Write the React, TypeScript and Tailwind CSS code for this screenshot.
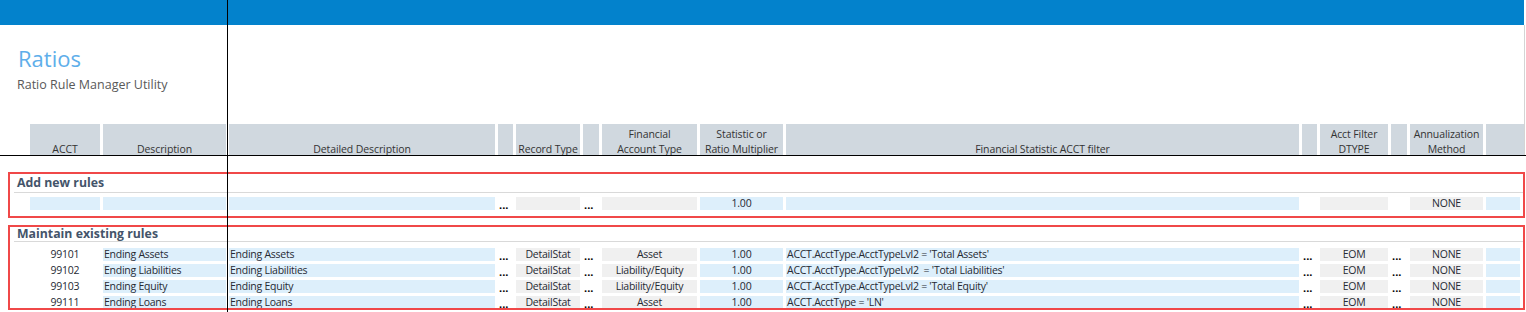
const font = { fontFamily: '"Open Sans", "Noto Sans", sans-serif' };

type Cell = { text: string; kind: "blue" | "gray" | "none" | "dots"; align?: "left" | "center" };

const headers: { lines: string[] }[] = [
  { lines: ["ACCT"] },
  { lines: ["Description"] },
  { lines: ["Detailed Description"] },
  { lines: [] },
  { lines: ["Record Type"] },
  { lines: [] },
  { lines: ["Financial", "Account Type"] },
  { lines: ["Statistic or", "Ratio Multiplier"] },
  { lines: ["Financial Statistic ACCT filter"] },
  { lines: [] },
  { lines: ["Acct Filter", "DTYPE"] },
  { lines: [] },
  { lines: ["Annualization", "Method"] },
  { lines: [] },
];

const newRow: Cell[] = [
  { text: "", kind: "blue" },
  { text: "", kind: "blue" },
  { text: "", kind: "blue" },
  { text: "...", kind: "dots" },
  { text: "", kind: "gray" },
  { text: "...", kind: "dots" },
  { text: "", kind: "gray" },
  { text: "1.00", kind: "blue", align: "center" },
  { text: "", kind: "blue" },
  { text: "", kind: "none" },
  { text: "", kind: "gray" },
  { text: "", kind: "none" },
  { text: "NONE", kind: "gray", align: "center" },
  { text: "", kind: "blue" },
];

const rules = [
  { acct: "99101", desc: "Ending Assets", type: "Asset", filter: "ACCT.AcctType.AcctTypeLvl2 = 'Total Assets'" },
  { acct: "99102", desc: "Ending Liabilities", type: "Liability/Equity", filter: "ACCT.AcctType.AcctTypeLvl2  = 'Total Liabilities'" },
  { acct: "99103", desc: "Ending Equity", type: "Liability/Equity", filter: "ACCT.AcctType.AcctTypeLvl2 = 'Total Equity'" },
  { acct: "99111", desc: "Ending Loans", type: "Asset", filter: "ACCT.AcctType = 'LN'" },
];

const ruleCells = (r: (typeof rules)[number]): Cell[] => [
  { text: r.acct, kind: "none", align: "center" },
  { text: r.desc, kind: "blue" },
  { text: r.desc, kind: "blue" },
  { text: "...", kind: "dots" },
  { text: "DetailStat", kind: "gray", align: "center" },
  { text: "...", kind: "dots" },
  { text: r.type, kind: "gray", align: "center" },
  { text: "1.00", kind: "blue", align: "center" },
  { text: r.filter, kind: "blue" },
  { text: "...", kind: "dots" },
  { text: "EOM", kind: "gray", align: "center" },
  { text: "...", kind: "dots" },
  { text: "NONE", kind: "gray", align: "center" },
  { text: "", kind: "blue" },
];

const CellView = ({ cell }: { cell: Cell }) => {
  if (cell.kind === "dots") {
    return (
      <div className="h-[13px] pl-[1px] text-[11px] font-bold leading-[15px] text-black">{cell.text}</div>
    );
  }
  const bg =
    cell.kind === "blue" ? "bg-[#ddeffb]" : cell.kind === "gray" ? "bg-[#f0f0f0]" : "";
  const align = cell.align === "center" ? "text-center" : "text-left pl-[1px]";
  return (
    <div
      className={`h-[13px] overflow-hidden whitespace-pre text-[10.5px] leading-[13px] tracking-[-0.25px] text-[#262a33] ${bg} ${align}`}
    >
      {cell.text}
    </div>
  );
};

const RowGrid = ({ cells }: { cells: Cell[] }) => (
  <div className="grid grid-cols-[70px_123px_266px_15px_64px_16px_95px_83px_513px_15px_68px_16px_73px_34px] gap-x-[3px]">
    {cells.map((c, i) => (
      <CellView key={i} cell={c} />
    ))}
  </div>
);

const SectionTitle = ({ title }: { title: string }) => (
  <div className="ml-[4px] border-b border-[#d9d9d9] pl-[3px] text-[12.3px] font-bold text-[#44546a]">
    {title}
  </div>
);

export default function App() {
  return (
    <div className="relative h-[312px] w-[1526px] overflow-hidden bg-white" style={font}>
      {/* ribbon bar */}
      <div className="h-[25px] w-[1524px] bg-[#0382cc]" />

      {/* title + header band */}
      <div className="w-[1525px] border-r border-[#d4d4d4]">
        <div className="h-[99px] pl-[18px] pt-[19px]">
          <div className="text-[22px] leading-[28px] text-[#5eaeea]">Ratios</div>
          <div className="-ml-px pt-[5px] text-[12.5px] leading-[16px] text-[#595959]">
            Ratio Rule Manager Utility
          </div>
        </div>
        <div className="pl-[30px]">
          <div className="grid h-[31px] grid-cols-[70px_123px_266px_15px_64px_16px_95px_83px_513px_15px_68px_16px_73px_38px] gap-x-[3px]">
            {headers.map((h, i) => (
              <div
                key={i}
                className="flex flex-col justify-end overflow-hidden bg-[#d0d8df] text-center text-[10.5px] leading-[15px] tracking-[-0.1px] text-[#333]"
              >
                <div className="translate-y-[1.5px]">
                  {h.lines.map((l) => (
                    <div key={l} className="whitespace-nowrap">
                      {l}
                    </div>
                  ))}
                </div>
              </div>
            ))}
          </div>
        </div>
      </div>
      <div className="h-px w-full bg-black" />

      {/* add new rules */}
      <div className="ml-[8px] mt-[16px] h-[46px] w-[1517px] border-2 border-[#f04848]">
        <div className="h-[18px] leading-[18px]">
          <SectionTitle title="Add new rules" />
        </div>
        <div className="pl-[20px] pt-[5px]">
          <RowGrid cells={newRow} />
        </div>
      </div>

      {/* maintain existing rules */}
      <div className="ml-[8px] mt-[7px] h-[85px] w-[1517px] overflow-hidden border-2 border-[#f04848]">
        <div className="h-[15px] leading-[14px]">
          <SectionTitle title="Maintain existing rules" />
        </div>
        <div className="flex flex-col gap-y-[3px] pl-[20px] pt-[6px]">
          {rules.map((r) => (
            <RowGrid key={r.acct} cells={ruleCells(r)} />
          ))}
        </div>
      </div>

      {/* freeze pane line */}
      <div className="absolute left-[227px] top-0 h-full w-px bg-black" />
    </div>
  );
}
